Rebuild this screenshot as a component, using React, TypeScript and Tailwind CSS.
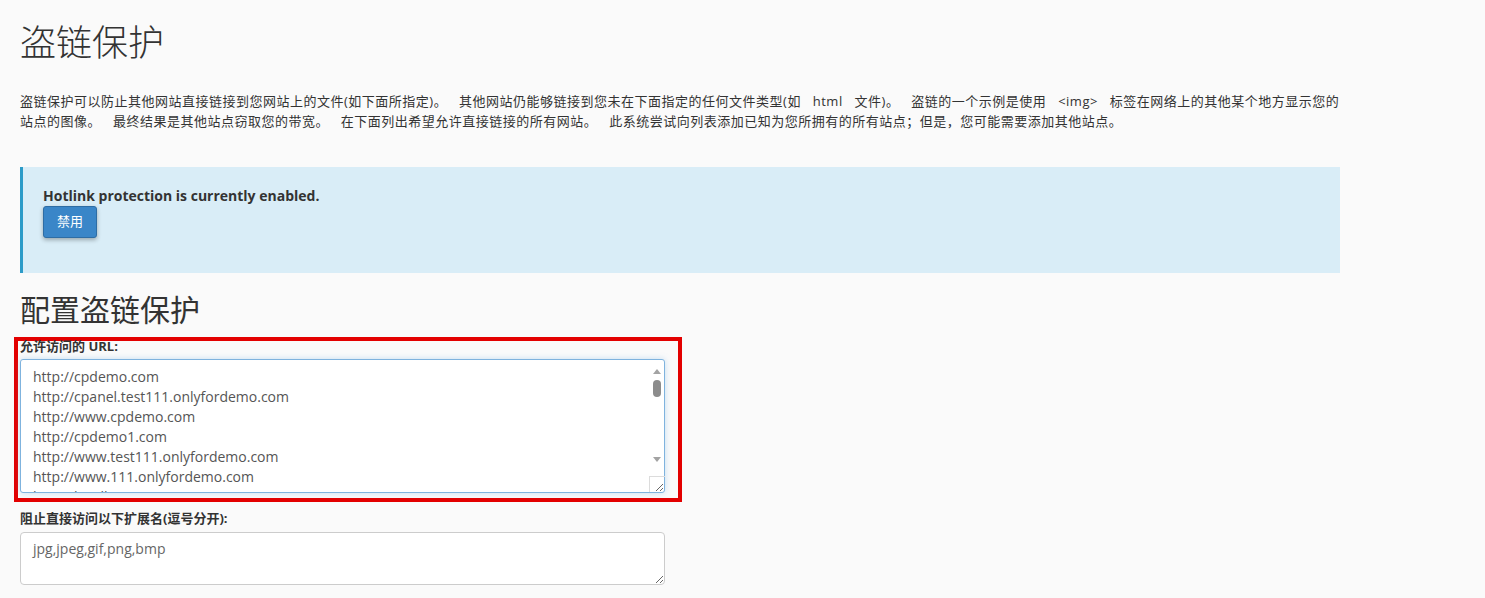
import React from "react";

const urls = [
  "http://cpdemo.com",
  "http://cpanel.test111.onlyfordemo.com",
  "http://www.cpdemo.com",
  "http://cpdemo1.com",
  "http://www.test111.onlyfordemo.com",
  "http://www.111.onlyfordemo.com",
  "http://localhost",
  "http://www.localhost",
].join("\n");

export default function App() {
  return (
    <div className="min-h-screen bg-[#fafafa] font-['Open_Sans','Noto_Sans_CJK_SC',sans-serif] text-[#333]">
      <div className="px-5 pt-[23px]">
        {/* Page header */}
        <h1 className="text-[36px] font-light leading-[40px] text-[#333]">盗链保护</h1>

        <p className="mt-[28px] max-w-[1320px] text-[13px] leading-[20px] tracking-[0.5px] text-[#333] [word-spacing:8px]">
          盗链保护可以防止其他网站直接链接到您网站上的文件(如下面所指定)。 其他网站仍能够链接到您未在下面指定的任何文件类型(如 html 文件)。 盗链的一个示例是使用 &lt;img&gt; 标签在网络上的其他某个地方显示您的站点的图像。 最终结果是其他站点窃取您的带宽。 在下面列出希望允许直接链接的所有网站。 此系统尝试向列表添加已知为您所拥有的所有站点；但是，您可能需要添加其他站点。
        </p>

        {/* Status callout */}
        <div className="mt-[36px] w-[1320px] border-l-[3px] border-[#2c9bc8] bg-[#d9edf7] pt-[19px] pb-[35px] pl-[20px]">
          <p className="text-[14px] font-bold leading-[20px] text-[#333]">Hotlink protection is currently enabled.</p>
          <button
            type="button"
            className="flex h-[32px] w-[54px] items-center justify-center rounded-[3px] border border-[#2e6da4] bg-[#3a86c8] text-[13px] text-white shadow-[0_2px_4px_rgba(0,0,0,0.3)]"
          >
            禁用
          </button>
        </div>

        {/* Config */}
        <h2 className="mt-[19px] text-[30px] font-normal leading-[36px] text-[#333]">配置盗链保护</h2>

        <div className="-ml-[6px] mt-[9px] h-[165px] w-[668px] border-4 border-[#e30000] pl-[2px]">
          <label className="-mt-[4px] block text-[13px] font-bold leading-[18px] text-[#333]">允许访问的 URL:</label>
          <div className="relative mt-[4px] w-[645px]">
            <textarea
              readOnly
              value={urls}
              className="block h-[134px] w-full resize-y overflow-y-hidden rounded-[3px] border border-[#7fb3de] bg-white py-[7px] pl-[12px] pr-[20px] text-[14px] leading-[20px] text-[#555] shadow-[0_0_6px_rgba(102,175,233,0.35)] outline-none"
            />
            {/* scrollbar drawn over the field */}
            <div className="pointer-events-none absolute top-[1px] right-[1px] bottom-[1px] flex w-[15px] flex-col items-center">
              <span className="mt-[9px] h-0 w-0 border-x-[4px] border-b-[5px] border-x-transparent border-b-[#a3a3a3]" />
              <span className="mt-[6px] h-[17px] w-[8px] rounded-full bg-[#8c8c8c]" />
              <span className="mt-[60px] h-0 w-0 border-x-[4px] border-t-[5px] border-x-transparent border-t-[#a3a3a3]" />
              <span className="mt-auto h-[16px] w-[16px] border-t border-l border-[#dcdcdc]" />
            </div>
          </div>
        </div>

        <label className="mt-[7px] block text-[13px] font-bold leading-[18px] text-[#333]">阻止直接访问以下扩展名(逗号分开):</label>
        <textarea
          readOnly
          value="jpg,jpeg,gif,png,bmp"
          className="mt-[5px] block h-[53px] w-[645px] resize-y rounded-[4px] border border-[#ccc] bg-white px-[12px] py-[6px] text-[14px] leading-[20px] text-[#666] outline-none"
        />
      </div>
    </div>
  );
}
